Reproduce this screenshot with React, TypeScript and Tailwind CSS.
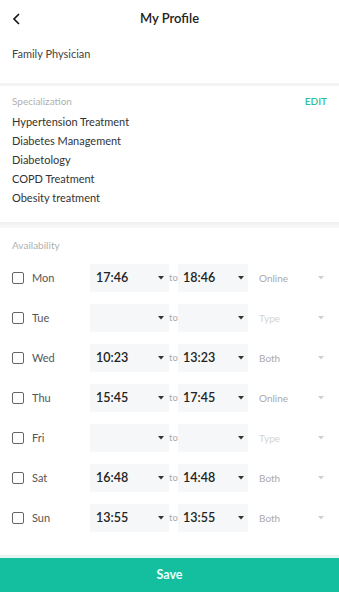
import React from 'react';

interface IDay {
  day: string;
  from: string;
  to: string;
  type: string;
}

const days: IDay[] = [
  { day: 'Mon', from: '17:46', to: '18:46', type: 'Online' },
  { day: 'Tue', from: '', to: '', type: '' },
  { day: 'Wed', from: '10:23', to: '13:23', type: 'Both' },
  { day: 'Thu', from: '15:45', to: '17:45', type: 'Online' },
  { day: 'Fri', from: '', to: '', type: '' },
  { day: 'Sat', from: '16:48', to: '14:48', type: 'Both' },
  { day: 'Sun', from: '13:55', to: '13:55', type: 'Both' },
];

const specializations = [
  'Hypertension Treatment',
  'Diabetes Management',
  'Diabetology',
  'COPD Treatment',
  'Obesity treatment',
];

function Caret({ color }: { color: string }) {
  return (
    <svg width="6" height="4" viewBox="0 0 6 4" fill={color}>
      <path d="M0 0h6L3 3.5z" />
    </svg>
  );
}

function DayRow({
  day, from, to, type,
}: IDay) {
  return (
    <div className="h-[40px] flex items-center px-3">
      <div className="w-[78px] flex items-center">
        <span className="w-[12px] h-[12px] border-[1.5px] border-[#666] rounded-[2px]" />
        <span className="ml-[8px] text-[11px] text-[#555]">{day}</span>
      </div>
      <div className="w-[79px] h-[28px] bg-[#f5f7f8] flex items-center justify-between pl-[6px] pr-[5px]">
        <span className="text-[12.5px] text-[#222] font-semibold">{from}</span>
        <Caret color="#333" />
      </div>
      <span className="w-[9px] text-center text-[9.5px] text-[#aaa]">to</span>
      <div className="w-[70px] h-[28px] bg-[#f5f7f8] flex items-center justify-between pl-[5px] pr-[4px]">
        <span className="text-[12.5px] text-[#222] font-semibold">{to}</span>
        <Caret color="#333" />
      </div>
      <div className="flex-1 flex items-center justify-between pl-[11px] pr-[3px]">
        <span className={`text-[10px] ${type ? 'text-[#aaa]' : 'text-[#d4d4d4]'}`}>{type || 'Type'}</span>
        <Caret color="#d0d0d0" />
      </div>
    </div>
  );
}

export default function App() {
  return (
    <div className="w-[339px] h-[592px] bg-white flex flex-col overflow-hidden" style={{ fontFamily: 'Lato, "Noto Sans", sans-serif' }}>
      <div className="h-[38px] flex items-center relative shrink-0">
        <svg className="absolute left-[12px] top-[13px]" width="9" height="12" viewBox="0 0 9 12" fill="none" stroke="#111" strokeWidth="1.6">
          <path d="M7 1L2 6l5 5" />
        </svg>
        <h1 className="w-full text-center text-[13px] font-semibold text-[#222]">My Profile</h1>
      </div>

      <div className="flex-1 overflow-hidden">
        <div className="px-3 pt-[8px] pb-[21px]">
          <p className="text-[11px] leading-[16px] text-[#444]">Family Physician</p>
        </div>
        <div className="h-[3px] bg-[#f2f3f4]" />

        <div className="px-3 pt-[8px] pb-[15px]">
          <div className="flex items-center justify-between leading-[14px]">
            <span className="text-[10px] text-[#b0b0b0]">Specialization</span>
            <span className="text-[10px] font-semibold text-[#2bbf9c]">EDIT</span>
          </div>
          <ul className="mt-[4px]">
            {specializations.map((s) => (
              <li key={s} className="text-[11px] leading-[19px] text-[#333]">{s}</li>
            ))}
          </ul>
        </div>
        <div className="h-[6px] bg-gradient-to-b from-[#efefef] to-[#f9f9f9]" />

        <div className="pt-[10px]">
          <p className="px-3 text-[10px] leading-[14px] text-[#b0b0b0]">Availability</p>
          <div className="mt-[6px]">
            {days.map((d) => (
              <DayRow key={d.day} day={d.day} from={d.from} to={d.to} type={d.type} />
            ))}
          </div>
        </div>
      </div>

      <div className="h-[3px] bg-[#e8f5f3] shrink-0" />
      <button type="button" className="h-[34px] shrink-0 bg-[#14bf9f] text-[12.5px] font-bold text-[#eafff9]">
        Save
      </button>
    </div>
  );
}
